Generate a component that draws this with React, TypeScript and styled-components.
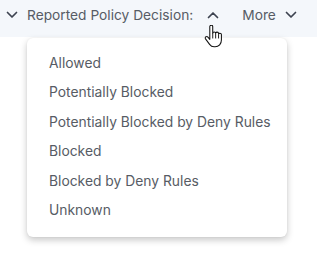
import React from "react";
import styled, { createGlobalStyle } from "styled-components";

const options = [
  "Allowed",
  "Potentially Blocked",
  "Potentially Blocked by Deny Rules",
  "Blocked",
  "Blocked by Deny Rules",
  "Unknown",
];

const Chevron: React.FC<{ up?: boolean }> = ({ up }) => (
  <svg width="12" height="8" viewBox="0 0 12 8" fill="none">
    <path
      d={up ? "M1.5 6.5 L6 2 L10.5 6.5" : "M1.5 1.5 L6 6 L10.5 1.5"}
      stroke="#3d4350"
      strokeWidth="1.7"
      strokeLinecap="round"
      strokeLinejoin="round"
    />
  </svg>
);

const HandCursor = () => (
  <svg width="21" height="23" viewBox="0 0 20 22">
    <path
      d="M5.5 1.5c0-.8.6-1.4 1.4-1.4s1.4.6 1.4 1.4v6.2c.2-.7.8-1.1 1.4-1.1.8 0 1.3.5 1.4 1.2.2-.6.8-1 1.4-1 .8 0 1.4.6 1.4 1.4v.4c.2-.5.7-.8 1.3-.8.8 0 1.4.6 1.4 1.4v5.2c0 3.6-2.4 6.4-6 6.4H9.6c-1.9 0-3.3-.9-4.3-2.3L1.4 13.3c-.5-.7-.3-1.6.4-2 .6-.4 1.4-.3 1.9.3l1.8 2.1V1.5z"
      fill="#fff"
      stroke="#111"
      strokeWidth="1"
      strokeLinejoin="round"
    />
    <path d="M8.3 8v4.5M11.1 8.2v4.3M13.9 9.2v3.3" stroke="#111" strokeWidth="0.9" strokeLinecap="round" />
  </svg>
);

export default function App() {
  return (
    <>
      <GlobalStyle />
      <Page>
        <FilterBar>
          <FilterButton>
            <Chevron />
            <Label>Reported Policy Decision:</Label>
            <CaretSlot>
              <Chevron up />
              <Pointer>
                <HandCursor />
              </Pointer>
            </CaretSlot>
          </FilterButton>
          <FilterButton>
            <Label>More</Label>
            <Chevron />
          </FilterButton>
        </FilterBar>
        <Menu>
          {options.map((opt) => (
            <MenuItem key={opt}>{opt}</MenuItem>
          ))}
        </Menu>
      </Page>
    </>
  );
}

const GlobalStyle = createGlobalStyle`
  html, body {
    margin: 0;
    padding: 0;
    background: #ffffff;
  }
  body {
    font-family: Inter, "Liberation Sans", sans-serif;
  }
`;

const Page = styled.div`
  position: relative;
  width: 317px;
  height: 254px;
  overflow: hidden;
  background: #ffffff;
`;

const FilterBar = styled.div`
  display: flex;
  align-items: center;
  height: 37px;
  padding: 0 0 0 6px;
  background: #f4f7fb;
  box-sizing: border-box;
  gap: 23px;
`;

const FilterButton = styled.div`
  display: flex;
  align-items: center;
  gap: 9px;
  color: #575c65;
  font-size: 13.75px;
  padding-bottom: 7px;
`;

const Label = styled.span`
  white-space: nowrap;
`;

const CaretSlot = styled.span`
  position: relative;
  display: flex;
  align-items: center;
  margin-left: 5px;
`;

const Pointer = styled.span`
  position: absolute;
  left: -3px;
  top: 14px;
  z-index: 5;
`;

const Menu = styled.div`
  position: absolute;
  top: 38px;
  left: 27px;
  width: 260px;
  padding: 10px 0 12px;
  background: #ffffff;
  border-radius: 6px;
  box-shadow: 0 3px 7px rgba(0, 0, 0, 0.22), 0 0 2px rgba(0, 0, 0, 0.06);
  box-sizing: border-box;
`;

const MenuItem = styled.div`
  height: 29.5px;
  display: flex;
  align-items: center;
  padding-left: 22px;
  font-size: 13.85px;
  color: #575c65;
  white-space: nowrap;
`;
